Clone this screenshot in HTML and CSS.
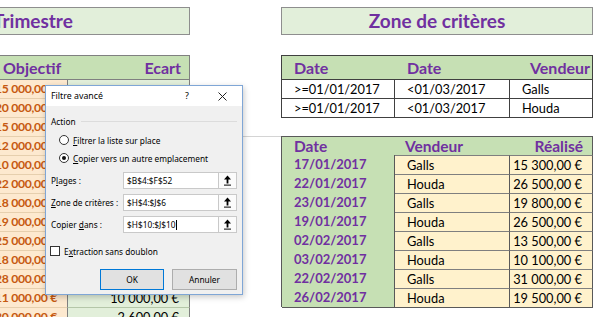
FILE: index.html
```html
<!DOCTYPE html>
<html lang="fr">
<head>
    <meta charset="UTF-8">
    <meta name="viewport" content="width=device-width, initial-scale=1.0">
    <title>Filtre avancé</title>
    <link rel="stylesheet" href="styles.css">
</head>
<body>
    <div class="sheet">
        <div class="titles">
            <div class="title title-left">Trimestre</div>
            <div class="title title-right">Zone de critères</div>
        </div>

        <div class="tables">
            <div class="objectifs">
                <div class="obj-row obj-head">
                    <div class="obj-h1">Objectif</div>
                    <div class="obj-h2">Ecart</div>
                </div>
                <!-- la colonne Ecart est cachee par la boite jusqu'a l'avant-derniere ligne -->
                <div class="obj-row"><div class="obj-goal"><span>15 000,00 €</span></div><div class="obj-gap"></div></div>
                <div class="obj-row"><div class="obj-goal"><span>20 000,00 €</span></div><div class="obj-gap"></div></div>
                <div class="obj-row"><div class="obj-goal"><span>15 000,00 €</span></div><div class="obj-gap"></div></div>
                <div class="obj-row"><div class="obj-goal"><span>12 000,00 €</span></div><div class="obj-gap"></div></div>
                <div class="obj-row"><div class="obj-goal"><span>10 000,00 €</span></div><div class="obj-gap"></div></div>
                <div class="obj-row"><div class="obj-goal"><span>22 000,00 €</span></div><div class="obj-gap"></div></div>
                <div class="obj-row"><div class="obj-goal"><span>18 000,00 €</span></div><div class="obj-gap"></div></div>
                <div class="obj-row"><div class="obj-goal"><span>19 000,00 €</span></div><div class="obj-gap"></div></div>
                <div class="obj-row"><div class="obj-goal"><span>25 000,00 €</span></div><div class="obj-gap"></div></div>
                <div class="obj-row"><div class="obj-goal"><span>18 000,00 €</span></div><div class="obj-gap"></div></div>
                <div class="obj-row"><div class="obj-goal"><span>28 000,00 €</span></div><div class="obj-gap"></div></div>
                <div class="obj-row"><div class="obj-goal"><span>11 000,00 €</span></div><div class="obj-gap">10 000,00 €</div></div>
                <div class="obj-row"><div class="obj-goal"><span>20 000,00 €</span></div><div class="obj-gap">2 600,00 €</div></div>
            </div>

            <div class="spacer"><div class="rule"></div></div>

            <div class="right">
                <div class="criteres">
                    <div class="crit-row crit-head">
                        <div class="pad">Date</div>
                        <div class="pad">Date</div>
                        <div class="end">Vendeur</div>
                    </div>
                    <div class="crit-row">
                        <div class="pad">&gt;=01/01/2017</div>
                        <div class="pad">&lt;01/03/2017</div>
                        <div class="pad">Galls</div>
                    </div>
                    <div class="crit-row">
                        <div class="pad">&gt;=01/01/2017</div>
                        <div class="pad">&lt;01/03/2017</div>
                        <div class="pad">Houda</div>
                    </div>
                </div>

                <div class="extraction">
                    <div class="ext-row ext-head">
                        <div class="pad">Date</div>
                        <div class="pad-s">Vendeur</div>
                        <div class="num">Réalisé</div>
                    </div>
                    <div class="ext-row"><div class="ext-date">17/01/2017</div><div class="ext-cell">Galls</div><div class="ext-cell num">15 300,00 €</div></div>
                    <div class="ext-row"><div class="ext-date">22/01/2017</div><div class="ext-cell">Houda</div><div class="ext-cell num">26 500,00 €</div></div>
                    <div class="ext-row"><div class="ext-date">23/01/2017</div><div class="ext-cell">Galls</div><div class="ext-cell num">19 800,00 €</div></div>
                    <div class="ext-row"><div class="ext-date">19/01/2017</div><div class="ext-cell">Houda</div><div class="ext-cell num">26 500,00 €</div></div>
                    <div class="ext-row"><div class="ext-date">02/02/2017</div><div class="ext-cell">Galls</div><div class="ext-cell num">13 500,00 €</div></div>
                    <div class="ext-row"><div class="ext-date">03/02/2017</div><div class="ext-cell">Houda</div><div class="ext-cell num">10 100,00 €</div></div>
                    <div class="ext-row"><div class="ext-date">22/02/2017</div><div class="ext-cell">Galls</div><div class="ext-cell num">31 000,00 €</div></div>
                    <div class="ext-row"><div class="ext-date">26/02/2017</div><div class="ext-cell">Houda</div><div class="ext-cell num">19 500,00 €</div></div>
                </div>
            </div>
        </div>

        <!-- boite de dialogue par-dessus la feuille -->
        <div class="dialog">
            <div class="dlg-title">
                <span class="dlg-name">Filtre avancé</span>
                <span class="dlg-help">?</span>
                <span class="dlg-close">
                    <svg width="9" height="9" viewBox="0 0 9 9"><path d="M0.5 0.5 L8.5 8.5 M8.5 0.5 L0.5 8.5" stroke="#222" stroke-width="1" fill="none"/></svg>
                </span>
            </div>
            <div class="dlg-body">
                <div class="group-title"><span>Action</span><span class="group-line"></span></div>
                <div class="radio"><span class="radio-dot"></span><span><u>F</u>iltrer la liste sur place</span></div>
                <div class="radio"><span class="radio-dot checked"></span><span><u>C</u>opier vers un autre emplacement</span></div>

                <div class="field field-first">
                    <span class="field-label">P<u>l</u>ages :</span>
                    <span class="field-input">$B$4:$F$52</span>
                    <span class="field-btn"><svg width="9" height="11" viewBox="0 0 9 11"><path d="M4.5 0.5 L1 4.5 H3.6 V8.5 H5.4 V4.5 H8 Z" fill="#000"/><rect x="1" y="9.6" width="7" height="1" fill="#000"/></svg></span>
                </div>
                <div class="field">
                    <span class="field-label"><u>Z</u>one de critères :</span>
                    <span class="field-input">$H$4:$J$6</span>
                    <span class="field-btn"><svg width="9" height="11" viewBox="0 0 9 11"><path d="M4.5 0.5 L1 4.5 H3.6 V8.5 H5.4 V4.5 H8 Z" fill="#000"/><rect x="1" y="9.6" width="7" height="1" fill="#000"/></svg></span>
                </div>
                <div class="field">
                    <span class="field-label">Copier <u>d</u>ans :</span>
                    <span class="field-input">$H$10:$J$10<span class="caret"></span></span>
                    <span class="field-btn"><svg width="9" height="11" viewBox="0 0 9 11"><path d="M4.5 0.5 L1 4.5 H3.6 V8.5 H5.4 V4.5 H8 Z" fill="#000"/><rect x="1" y="9.6" width="7" height="1" fill="#000"/></svg></span>
                </div>

                <div class="check"><span class="check-box"></span><span>E<u>x</u>traction sans doublon</span></div>

                <div class="buttons">
                    <span class="btn btn-ok">OK</span>
                    <span class="btn">Annuler</span>
                </div>
            </div>
        </div>
    </div>
</body>
</html>
```

FILE: styles.css
```css
body{
    margin: 0;
    background: #fff;
}
.sheet{
    position: relative;
    width: 600px;
    height: 317px;
    overflow: hidden;
    font-family: Lato, "Liberation Sans", sans-serif;
    font-size: 12.8px;
    color: #000;
}

/* titres */
.titles{
    display: flex;
    gap: 91px;
    padding-top: 7px;
}
.title{
    box-sizing: border-box;
    height: 28px;
    background: #e2efda;
    border: 1px solid #8e8e8e;
    color: #7030a0;
    font-weight: bold;
    font-size: 19px;
    line-height: 26px;
    white-space: nowrap;
    overflow: hidden;
}
.title-left{
    width: 190px;
    border-left: none;
    text-indent: -7px;
}
.title-right{
    width: 312px;
    text-align: center;
}

.tables{
    display: flex;
    margin-top: 20px;
}
.spacer{
    width: 91px;
}
.rule{
    margin-top: 81px;
    border-top: 1px solid #d4d4d4;
}
.right{
    width: 312px;
}

/* tableau de gauche */
.objectifs{
    width: 190px;
}
.obj-row{
    display: grid;
    grid-template-columns: 67px 123px;
    height: 19px;
    line-height: 18px;
}
.obj-head{
    box-sizing: border-box;
    height: 25px;
    line-height: 23px;
    background: #c6e0b4;
    border-top: 1px solid #808080;
    border-right: 1px solid #808080;
    border-bottom: 1px solid #808080;
    color: #7030a0;
    font-weight: bold;
    font-size: 16px;
}
.obj-h1{
    padding-left: 3px;
}
.obj-h2{
    text-align: right;
    padding-right: 9px;
}
.obj-goal{
    box-sizing: border-box;
    display: flex;
    justify-content: flex-end;
    background: #fde9cf;
    color: #c65911;
    font-weight: bold;
    font-size: 12.2px;
    letter-spacing: -0.3px;
    padding-right: 10px;
    white-space: nowrap;
    border-bottom: 1px solid #e6cfae;
}
.obj-gap{
    box-sizing: border-box;
    background: #e2efda;
    text-align: right;
    padding-right: 10px;
    border-left: 1px solid #808080;
    border-right: 1px solid #808080;
    border-bottom: 1px solid #b4c6a8;
}

/* zone de criteres */
.criteres{
    border-left: 1px solid #404040;
    border-top: 1px solid #404040;
}
.crit-row{
    display: grid;
    grid-template-columns: 113px 115px 83px;
    height: 19px;
    line-height: 18px;
}
.crit-row > div{
    box-sizing: border-box;
    border-right: 1px solid #404040;
    border-bottom: 1px solid #404040;
}
.crit-head{
    height: 24px;
    line-height: 23px;
    background: #c6e0b4;
    color: #7030a0;
    font-weight: bold;
    font-size: 16px;
}
.crit-head > div{
    border-right: none;
}
.crit-head > div:last-child{
    border-right: 1px solid #404040;
}
.pad{
    padding-left: 12px;
}
.pad-s{
    padding-left: 10px;
}
.end{
    text-align: right;
    padding-right: 2px;
}
.num{
    text-align: right;
    padding-right: 10px;
}

/* extraction */
.extraction{
    margin-top: 18px;
    border-left: 1px solid #595959;
    border-top: 1px solid #595959;
}
.ext-row{
    display: grid;
    grid-template-columns: 113px 115px 83px;
    height: 19px;
    line-height: 18px;
}
.ext-row > div{
    box-sizing: border-box;
}
.ext-head{
    height: 18px;
    line-height: 18px;
    background: #c6e0b4;
    color: #7030a0;
    font-weight: bold;
    font-size: 15.5px;
    border-right: 1px solid #595959;
}
.ext-date{
    background: #c6e0b4;
    color: #7030a0;
    font-weight: bold;
    font-size: 13px;
    padding-left: 12px;
    border-right: 1px solid #595959;
}
.ext-cell{
    background: #fff2cc;
    padding-left: 12px;
    border-right: 1px solid #595959;
    border-top: 1px solid #7f7f7f;
}
.ext-row:last-child > div{
    border-bottom: 1px solid #595959;
}
.ext-cell.num{
    padding-left: 0;
}

/* boite de dialogue */
.dialog{
    position: absolute;
    left: 45px;
    top: 85px;
    box-sizing: border-box;
    width: 198px;
    height: 210px;
    background: #f0f0f0;
    border: 1px solid #7fa6d6;
    box-shadow: 1px 2px 6px rgba(0, 0, 0, 0.22);
    font-family: "Segoe UI", "Noto Sans", sans-serif;
    font-size: 8.3px;
    color: #000;
}
.dlg-title{
    display: flex;
    align-items: center;
    height: 20px;
    background: #fff;
    padding-left: 5px;
    font-size: 8.8px;
}
.dlg-name{
    flex: 1;
}
.dlg-help{
    width: 12px;
    text-align: center;
    margin-right: 25px;
}
.dlg-close{
    display: flex;
    margin-right: 15px;
}
.dlg-body{
    padding: 0 5px;
}
.group-title{
    display: flex;
    align-items: center;
    gap: 5px;
    height: 12px;
    margin-top: 9px;
}
.group-line{
    flex: 1;
    border-top: 1px solid #dcdcdc;
}
.radio{
    display: flex;
    align-items: center;
    gap: 4px;
    height: 16px;
    margin-left: 8px;
    margin-top: 5px;
}
.radio + .radio{
    margin-top: 2px;
}
.radio-dot{
    box-sizing: border-box;
    width: 10px;
    height: 10px;
    border: 1px solid #333;
    border-radius: 50%;
    background: #fff;
    display: flex;
    align-items: center;
    justify-content: center;
}
.radio-dot.checked::after{
    content: "";
    width: 4px;
    height: 4px;
    border-radius: 50%;
    background: #111;
}
.field{
    display: flex;
    align-items: center;
    height: 17px;
    margin-top: 5px;
}
.field-first{
    margin-top: 6px;
}
.field-label{
    width: 72px;
}
.field-input{
    box-sizing: border-box;
    width: 96px;
    height: 17px;
    line-height: 15px;
    background: #fff;
    border: 1px solid #c9c9c9;
    padding-left: 3px;
}
.caret{
    display: inline-block;
    width: 1px;
    height: 10px;
    background: #000;
    vertical-align: -2px;
}
.field-btn{
    box-sizing: border-box;
    width: 18px;
    height: 17px;
    background: #fbfbfb;
    border: 1px solid #c9c9c9;
    border-left: none;
    display: flex;
    align-items: center;
    justify-content: center;
}
.check{
    display: flex;
    align-items: center;
    gap: 4px;
    height: 12px;
    margin-top: 12px;
    margin-left: -1px;
}
.check-box{
    box-sizing: border-box;
    width: 10px;
    height: 10px;
    border: 1px solid #333;
    background: #fff;
}
.buttons{
    display: flex;
    justify-content: flex-end;
    gap: 8px;
    margin-top: 12px;
}
.btn{
    box-sizing: border-box;
    width: 65px;
    height: 21px;
    line-height: 19px;
    text-align: center;
    background: #e1e1e1;
    border: 1px solid #adadad;
}
.btn-ok{
    width: 64px;
    border-color: #0078d7;
}
```
